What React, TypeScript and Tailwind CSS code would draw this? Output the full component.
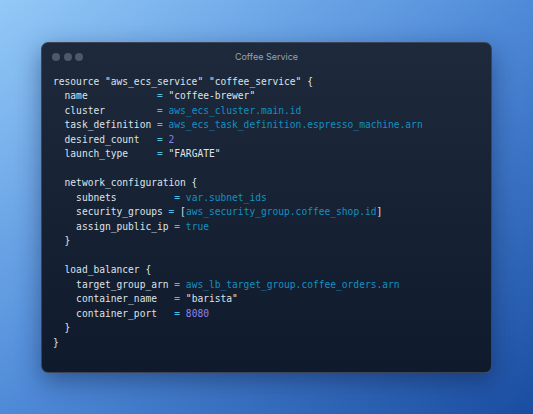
import React from "react";

type Tok = { t: string; c?: "ref" | "num" | "op" };

// each line is a list of tokens, default colour is the light text
const lines: Tok[][] = [
  [{ t: 'resource "aws_ecs_service" "coffee_service" {' }],
  [{ t: "  name            " }, { t: "=", c: "op" }, { t: ' "coffee-brewer"' }],
  [{ t: "  cluster         " }, { t: "=", c: "op" }, { t: " " }, { t: "aws_ecs_cluster.main.id", c: "ref" }],
  [{ t: "  task_definition " }, { t: "=", c: "op" }, { t: " " }, { t: "aws_ecs_task_definition.espresso_machine.arn", c: "ref" }],
  [{ t: "  desired_count   " }, { t: "=", c: "op" }, { t: " " }, { t: "2", c: "num" }],
  [{ t: "  launch_type     " }, { t: "=", c: "op" }, { t: ' "FARGATE"' }],
  [{ t: "" }],
  [{ t: "  network_configuration {" }],
  [{ t: "    subnets          " }, { t: "=", c: "op" }, { t: " " }, { t: "var.subnet_ids", c: "ref" }],
  [{ t: "    security_groups " }, { t: "=", c: "op" }, { t: " [" }, { t: "aws_security_group.coffee_shop.id", c: "ref" }, { t: "]" }],
  [{ t: "    assign_public_ip " }, { t: "=", c: "op" }, { t: " " }, { t: "true", c: "ref" }],
  [{ t: "  }" }],
  [{ t: "" }],
  [{ t: "  load_balancer {" }],
  [{ t: "    target_group_arn " }, { t: "=", c: "op" }, { t: " " }, { t: "aws_lb_target_group.coffee_orders.arn", c: "ref" }],
  [{ t: "    container_name   " }, { t: "=", c: "op" }, { t: ' "barista"' }],
  [{ t: "    container_port   " }, { t: "=", c: "op" }, { t: " " }, { t: "8080", c: "num" }],
  [{ t: "  }" }],
  [{ t: "}" }],
];

function tokClass(c?: Tok["c"]) {
  if (c === "ref") return "text-[#1391c0]";
  if (c === "num") return "text-[#8f80e8]";
  if (c === "op") return "text-[#4cc0e0]";
  return "text-[#dde3ea]";
}

export default function App() {
  return (
    <div className="w-[533px] h-[414px] flex items-center justify-center bg-gradient-to-br from-[#93c9f7] via-[#4f8ad8] to-[#1a4da1]">
      <div className="w-[451px] h-[331px] rounded-[7px] border border-[#3a4658] bg-gradient-to-b from-[#1e293b] to-[#0f1a2c] shadow-[0_8px_24px_rgba(10,25,60,0.45)] flex flex-col overflow-hidden">
        {/* title bar */}
        <div className="relative h-[28px] flex items-center px-[10px]">
          <div className="flex gap-[3.5px]">
            <span className="w-[8px] h-[8px] rounded-full bg-[#4f5866]" />
            <span className="w-[8px] h-[8px] rounded-full bg-[#4f5866]" />
            <span className="w-[8px] h-[8px] rounded-full bg-[#4f5866]" />
          </div>
          <div className="absolute inset-0 flex items-center justify-center text-[9px] text-[#9aa3b0] font-['Inter',sans-serif]">
            Coffee Service
          </div>
        </div>

        {/* code */}
        <pre className="px-[11px] pt-[4px] text-[9.6px] leading-[14.5px] font-['DejaVu_Sans_Mono',monospace]">
          {lines.map((ln, i) => (
            <div key={i} className="h-[14.5px] whitespace-pre">
              {ln.map((tk, j) => (
                <span key={j} className={tokClass(tk.c)}>
                  {tk.t}
                </span>
              ))}
            </div>
          ))}
        </pre>
      </div>
    </div>
  );
}
